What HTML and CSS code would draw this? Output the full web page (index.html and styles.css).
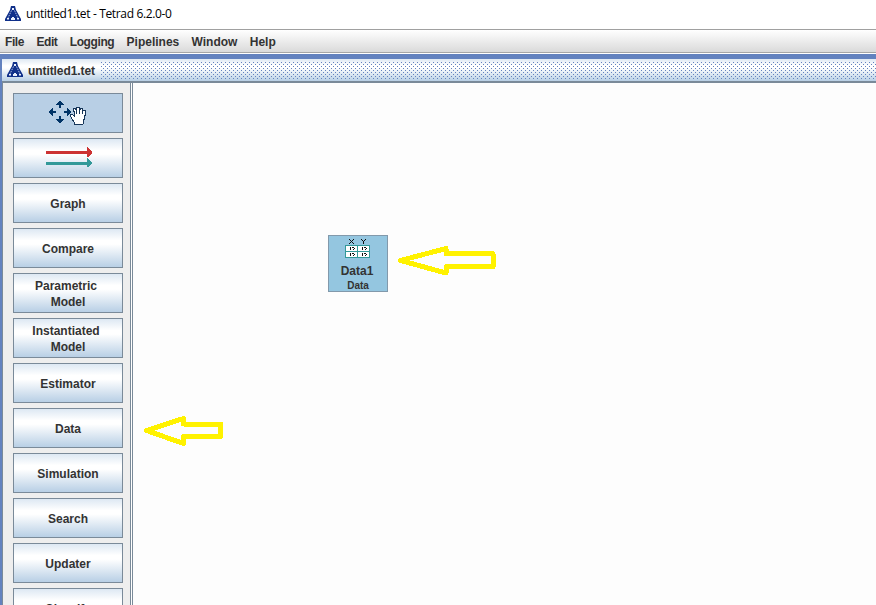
FILE: index.html
```html
<!DOCTYPE html>
<html lang="en">
<head>
<meta charset="utf-8">
<title>untitled1.tet - Tetrad 6.2.0-0</title>
<link rel="stylesheet" href="styles.css">
</head>
<body>
<svg class="defs" aria-hidden="true">
  <symbol id="logo" viewBox="0 0 16 16">
    <path d="M6 0h4l1 4 5 9v2H0v-2l5-9z" fill="#10308a"/>
    <path d="M6.500 4.500L3 12M9.500 4.500L13 12" stroke="#c3d0ee" stroke-width=".9" stroke-dasharray="1.500 1" fill="none"/>
    <path d="M7 2h2v2H7zM2 12h2v1.500H2zM12 12h2v1.500h-2zM7 11h2v1h1v2H6v-2h1z" fill="#e8effc"/>
  </symbol>
</svg>
<header class="titlebar"><svg class="logo"><use href="#logo"/></svg><span>untitled1.tet - Tetrad 6.2.0-0</span></header>
<nav class="menubar">
  <span class="tight">File</span><span class="tight">Edit</span><span class="tight">Logging</span><span>Pipelines</span><span>Window</span><span>Help</span>
</nav>
<section class="desktop">
  <div class="frame-title"><svg class="logo"><use href="#logo"/></svg><span>untitled1.tet</span><i class="grip"></i></div>
  <main class="workspace">
    <aside class="tools">
      <button class="tool icon selected">
        <svg width="40" height="26" viewBox="0 0 40 26" shape-rendering="crispEdges">
          <g fill="#003366">
            <path d="M11 1h2v1h1v1h1v1h1v1h-3v3h-2V5H8V4h1V3h1V2h1z"/>
            <path d="M11 23h2v-1h1v-1h1v-1h1v-1h-3v-3h-2v3H8v1h1v1h1v1h1z"/>
            <path d="M1 11h1v-1h1V9h1V8h1v3h3v2H5v3H4v-1H3v-1H2v-1H1z"/>
            <path d="M23 11h-1v-1h-1V9h-1V8h-1v3h-3v2h3v3h1v-1h1v-1h1v-1h1z"/>
          </g>
          <path d="M26.500 24.500v-2l-3-4-1-3v-1h2l2 2v-3l-1-4v-1h2l1 3V8l1-1h1l1 1v3l1-3h2v4l1-2h1l1 1v2l-1 5-1 3v3z" fill="#fff" stroke="#173659"/>
          <path d="M28.500 11v3M31.500 11v3M34.500 12v2" stroke="#173659" fill="none"/>
        </svg>
      </button>
      <button class="tool icon arrows">
        <svg width="48" height="22" viewBox="0 0 48 22" shape-rendering="crispEdges">
          <path d="M1 4h41V0h1v1h1v1h1v1h1v1h1v3h-1v1h-1v1h-1v1h-2V7H1z" fill="#cc3333"/>
          <path d="M1 15h41v-4h1v1h1v1h1v1h1v1h1v2h-1v1h-1v1h-1v1h-2v-2H1z" fill="#339999"/>
        </svg>
      </button>
      <button class="tool">Graph</button>
      <button class="tool">Compare</button>
      <button class="tool two"><span>Parametric</span><span>Model</span></button>
      <button class="tool two"><span>Instantiated</span><span>Model</span></button>
      <button class="tool">Estimator</button>
      <button class="tool">Data</button>
      <button class="tool">Simulation</button>
      <button class="tool">Search</button>
      <button class="tool">Updater</button>
      <button class="tool">Classify</button>
    </aside>
    <div class="canvas">
      <div class="node">
        <svg width="26" height="21" viewBox="0 0 26 21" shape-rendering="crispEdges">
          <path d="M4 1h1v1h1v1h1v-1h1v-1h1v1h-1v1h-1v1h1v1h1v1h-1v-1h-1v-1h-1v1h-1v1h-1v-1h1v-1h1v-1h-1v-1h-1zM16 1h1v1h1v1h1v-1h1v-1h1v1h-1v1h-1v3h-1v-3h-1v-1h-1z" fill="#111"/>
          <path d="M.5 7.500h24v12H.5zM.5 13.500h24M12.500 7.500v12" fill="#fff" stroke="#339999"/>
          <path d="M5 9h1v3H5zM7 9h2v1H7zM9 10h1v1H9zM8 11h1v1H8zM17 9h1v3h-1zM19 9h2v1h-2zM21 10h1v1h-1zM20 11h1v1h-1zM5 15h1v3H5zM7 15h2v1H7zM9 16h1v1H9zM8 17h1v1H8zM17 15h1v3h-1zM19 15h2v1h-2zM21 16h1v1h-1zM20 17h1v1h-1z" fill="#111"/>
        </svg>
        <b>Data1</b><small>Data</small>
      </div>
      <svg class="pointer node-pointer" viewBox="0 0 98 32" shape-rendering="crispEdges"><path d="M2.500 15.500L48 3.500v5.200h47v13H48v6.300z"/></svg>
      <svg class="pointer tool-pointer" viewBox="0 0 80 32" shape-rendering="crispEdges"><path d="M2.500 15.500L39.500 3.500v5.500h37v12.500h-37v7z"/></svg>
    </div>
  </main>
</section>
</body>
</html>
```
FILE: styles.css
```css
* { box-sizing: border-box; }
body {
  margin: 0;
  height: 605px;
  display: flex;
  flex-direction: column;
  overflow: hidden;
  font: bold 12px/16px "Liberation Sans", Arial, sans-serif;
  color: #333;
  background: #fff;
}
.defs { position: absolute; width: 0; height: 0; }
.logo { width: 16px; height: 16px; flex: none; }
.titlebar {
  height: 30px;
  flex: none;
  display: flex;
  align-items: center;
  gap: 5px;
  padding: 0 0 2px 5px;
  border-bottom: 1px solid #a0a0a0;
  font: 12px/16px "Open Sans", "Noto Sans", sans-serif;
  letter-spacing: -0.35px;
  color: #000;
}
.menubar {
  height: 23px;
  flex: none;
  display: flex;
  gap: 12.3px;
  align-items: center;
  padding: 2px 0 0 5px;
  background: linear-gradient(#fff, #dadada);
  border-bottom: 1px solid #a6a6a6;
}
.tight { letter-spacing: -0.4px; }
.desktop {
  flex: 1;
  min-height: 0;
  display: flex;
  flex-direction: column;
  margin-top: 1px;
  border-top: 5px solid #6382bf;
  border-left: 2px solid #6382bf;
}
.frame-title {
  height: 24px;
  flex: none;
  display: flex;
  align-items: center;
  padding-left: 5px;
  background: linear-gradient(#dfe9f3, #fff 30%, #fff 40%, #b8cfe5);
  border-bottom: 2px solid #7a8a99;
}
.frame-title span { margin: 2px 0 0 5px; letter-spacing: -0.08px; }
.grip {
  flex: 1;
  height: 17px;
  margin-left: 6px;
  --dot: conic-gradient(from 0deg at 1px 1px, transparent 75%, #6382bf 0);
  background: var(--dot) 0 0 / 4px 4px, var(--dot) 2px 2px / 4px 4px;
}
.workspace { flex: 1; min-height: 0; display: flex; border-left: 1px solid #7a8a99; }
.tools {
  width: 128px;
  flex: none;
  display: flex;
  flex-direction: column;
  align-items: center;
  gap: 5px;
  padding: 10px 7px 0 9px;
  background: #eee;
  border-right: 1px solid #7a8a99;
  overflow: hidden;
}
.tool {
  width: 110px;
  height: 40px;
  flex: none;
  display: flex;
  flex-direction: column;
  align-items: center;
  justify-content: center;
  margin: 0;
  padding: 2px 0 0 1px;
  font: inherit;
  color: #333;
  background: linear-gradient(#dde8f3, #fff 30%, #fff 40%, #b8cfe5);
  border: 1px solid #7a8a99;
  border-radius: 0;
}
.tool.icon { padding: 0; }
.tool.arrows { padding-left: 2px; }
.tool.selected { background: #b8cfe5; }
.two span:first-child { margin-right: 4px; }
.canvas {
  position: relative;
  flex: 1;
  margin-left: 1px;
  border-left: 1px solid #7a8a99;
  background: #fdfdfd;
}
.node {
  position: absolute;
  left: 195px;
  top: 152px;
  width: 60px;
  height: 57px;
  display: flex;
  flex-direction: column;
  align-items: center;
  padding-top: 2px;
  background: #94c6e0;
  border: 1px solid #8299ab;
}
.node svg { flex: none; }
.node b { line-height: 16px; margin: 4px 2px 0 0; }
.node small { font-size: 10px; line-height: 13px; }
.pointer { position: absolute; height: 32px; fill: none; stroke: #fff200; stroke-width: 5; stroke-linejoin: round; }
.node-pointer { left: 265px; top: 162px; width: 98px; }
.tool-pointer { left: 11px; top: 332px; width: 80px; }
```
